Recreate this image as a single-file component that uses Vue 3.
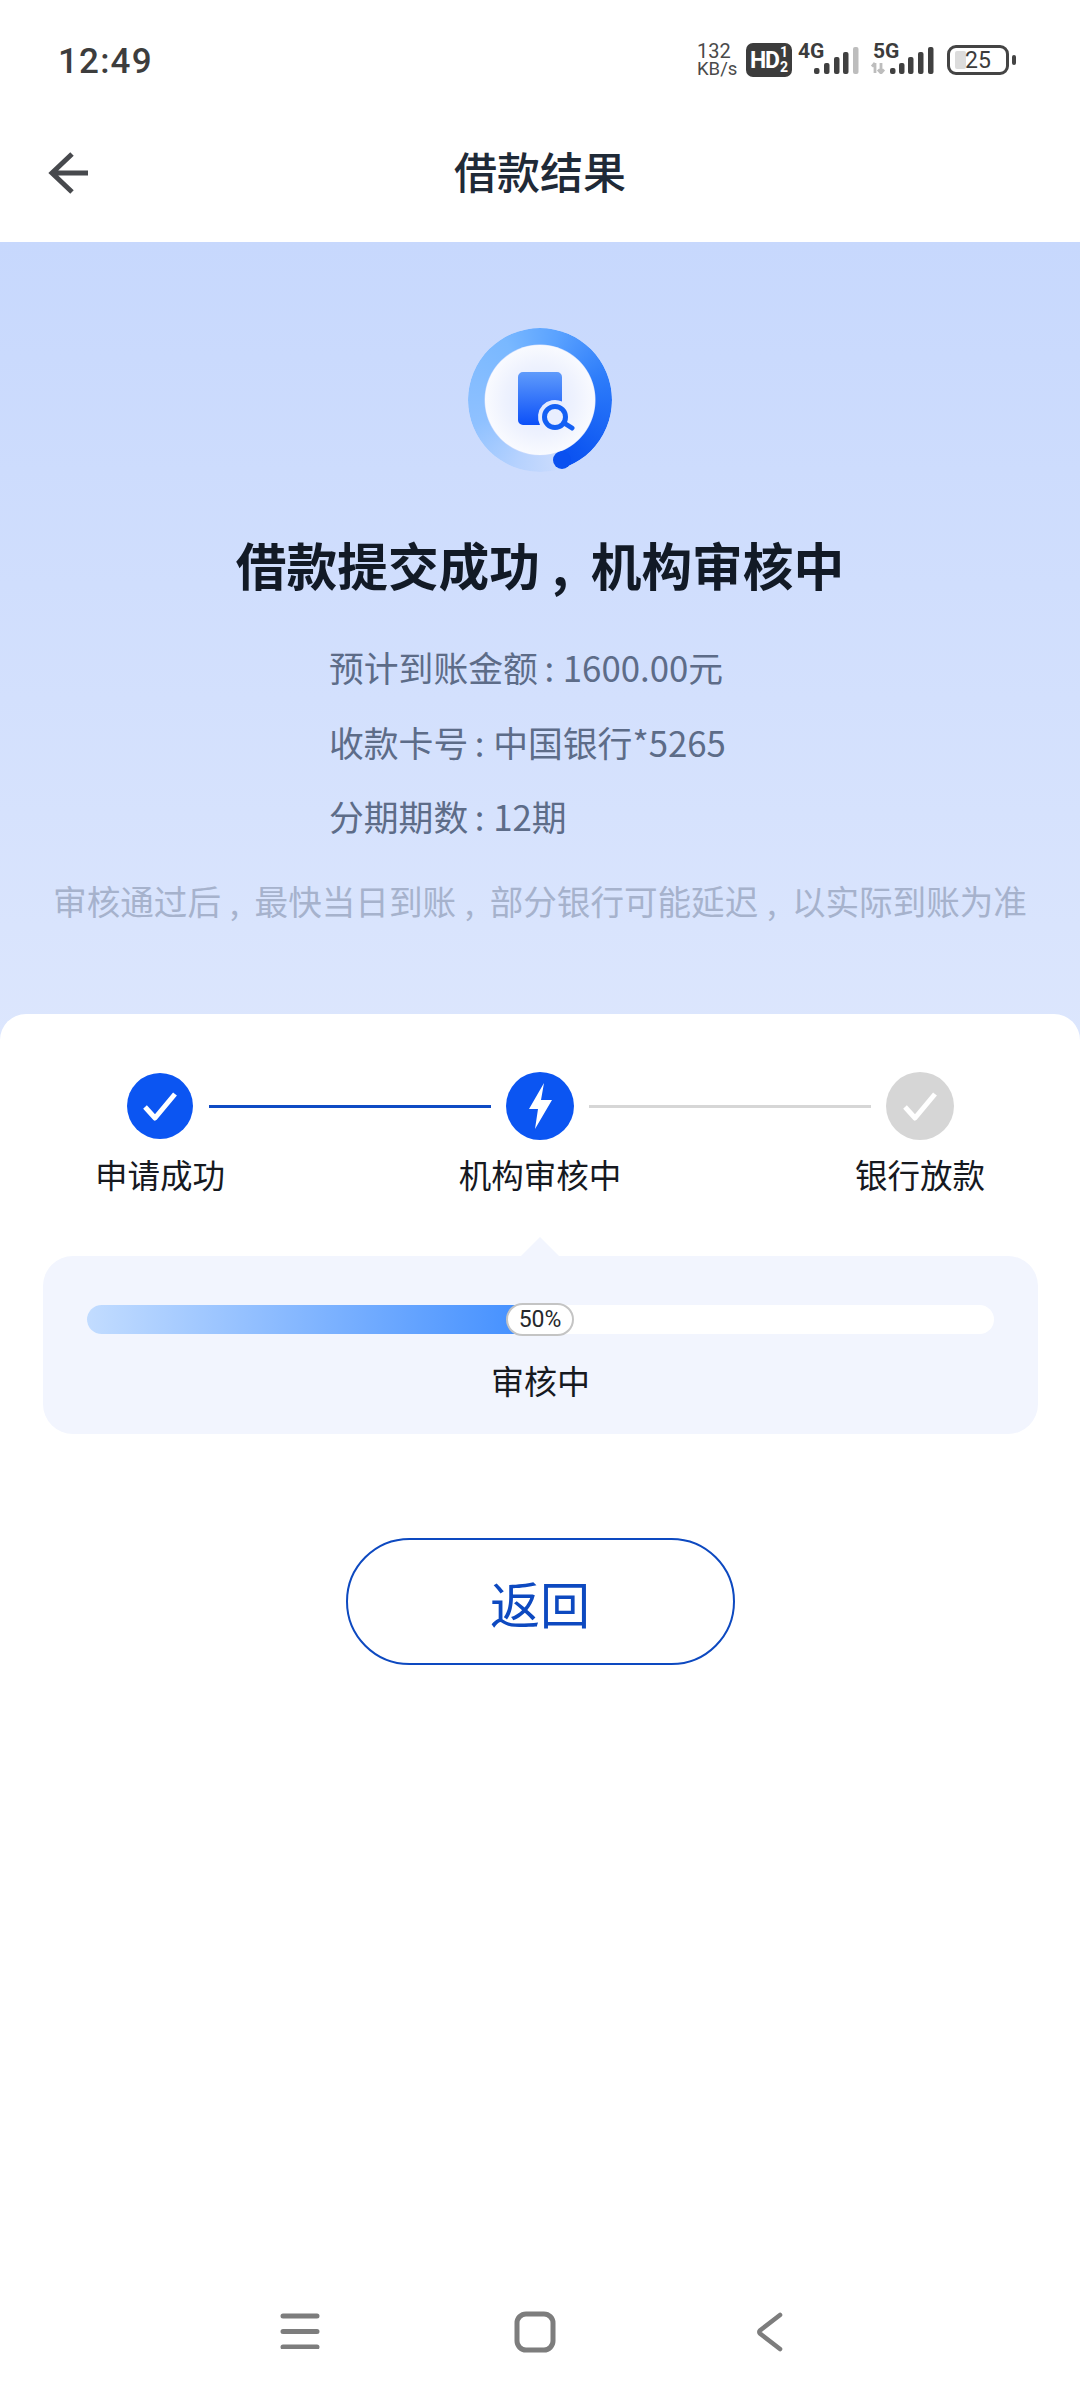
<script setup>
const rows = [
  { label: '预计到账金额', value: '1600.00元' },
  { label: '收款卡号', value: '中国银行*5265' },
  { label: '分期期数', value: '12期' }
]
const noteParts = ['审核通过后', '最快当日到账', '部分银行可能延迟', '以实际到账为准']
const steps = ['申请成功', '机构审核中', '银行放款']
const progress = 50
</script>

<template>
  <div class="page">
    <header class="status">
      <span class="time">12:49</span>
      <div class="status-right">
        <div class="speed"><span>132</span><span class="speed-unit">KB/s</span></div>
        <div class="hd"><b>HD</b><span class="hd-nums"><i>1</i><i>2</i></span></div>
        <div class="net net4">
          <span class="net-label">4G</span>
          <svg width="48" height="30" viewBox="0 0 48 30">
            <g fill="#404040">
              <rect x="0" y="24" width="5.500" height="6" rx="2" />
              <rect x="10" y="19" width="5.500" height="11" rx="2" />
              <rect x="20" y="13" width="5.500" height="17" rx="2" />
              <rect x="29" y="8" width="5.500" height="22" rx="2" />
            </g>
            <rect x="39" y="3" width="5.500" height="27" rx="2" fill="#bdbdbd" />
          </svg>
        </div>
        <div class="net net5">
          <span class="net-label">5G</span>
          <svg width="64" height="30" viewBox="0 0 64 30">
            <path d="M4 19v10M1 22.500l3-3.500M10 29V19M7 25.500l3 3.500 3-3.500" fill="none" stroke="#bdbdbd" stroke-width="2.800" />
            <g fill="#404040">
              <rect x="19" y="24" width="5.500" height="6" rx="2" />
              <rect x="28" y="19" width="5.500" height="11" rx="2" />
              <rect x="37" y="13" width="5.500" height="17" rx="2" />
              <rect x="47" y="8" width="5.500" height="22" rx="2" />
              <rect x="57" y="3" width="5.500" height="27" rx="2" />
            </g>
          </svg>
        </div>
        <div class="battery">
          <div class="battery-body"><span class="battery-fill"></span><span class="battery-num">25</span></div>
          <span class="battery-nub"></span>
        </div>
      </div>
    </header>

    <nav class="topbar">
      <svg class="back" width="42" height="42" viewBox="0 0 42 42">
        <path d="M41 21H5M25 2 5 21l20 19" fill="none" stroke="#47494d" stroke-width="5" />
      </svg>
      <h1>借款结果</h1>
    </nav>

    <section class="hero">
      <div class="emblem">
        <div class="ring"></div>
        <span class="ring-cap"></span>
        <div class="disc">
          <svg width="70" height="70" viewBox="0 0 70 70">
            <defs>
              <linearGradient id="doc" x1="0" y1="0" x2="0" y2="1">
                <stop offset="0" stop-color="#5f9bfb" />
                <stop offset="1" stop-color="#0c50f8" />
              </linearGradient>
            </defs>
            <path d="M5 2h34a5 5 0 0 1 5 5v24.500A17 17 0 0 0 22 55H5a5 5 0 0 1-5-5V7a5 5 0 0 1 5-5z" fill="url(#doc)" />
            <circle cx="37" cy="47" r="10.500" fill="#e9eefe" stroke="#1460f4" stroke-width="5" />
            <path d="M46 53l8 5" fill="none" stroke="#1460f4" stroke-width="5" stroke-linecap="round" />
          </svg>
        </div>
      </div>
      <h2>借款提交成功<span class="pc">,</span>机构审核中</h2>
      <div class="rows">
        <p v-for="r in rows" :key="r.label" class="row">{{ r.label }}<span class="colon">:</span>{{ r.value }}</p>
      </div>
      <p class="note">
        <template v-for="(part, i) in noteParts" :key="part"><span v-if="i" class="pc">,</span>{{ part }}</template>
      </p>
    </section>

    <main class="card">
      <div class="track">
        <span class="dot dot-small on">
          <svg width="40" height="40" viewBox="0 0 40 40"><path d="M5 21l10 11L35 8" fill="none" stroke="#fff" stroke-width="5" stroke-linejoin="round" /></svg>
        </span>
        <span class="line on"></span>
        <span class="dot on">
          <svg width="40" height="48" viewBox="0 0 40 48"><path d="M24 1 9 27h9l-3 20 17-29H21z" fill="#fff" /></svg>
        </span>
        <span class="line"></span>
        <span class="dot off">
          <svg width="40" height="40" viewBox="0 0 40 40"><path d="M5 21l10 11L35 8" fill="none" stroke="#fff" stroke-width="5" stroke-linejoin="round" /></svg>
        </span>
      </div>
      <div class="labels">
        <span v-for="s in steps" :key="s">{{ s }}</span>
      </div>

      <div class="panel">
        <div class="bar">
          <div class="bar-fill" :style="{ width: progress + '%' }"></div>
          <span class="badge">50%</span>
        </div>
        <p class="panel-text">审核中</p>
      </div>

      <button class="return">返回</button>
    </main>

    <footer class="sysnav">
      <svg width="40" height="36" viewBox="0 0 40 36">
        <path d="M3 3h34M3 18.500h34M3 34h34" fill="none" stroke="#7d7d7d" stroke-width="5" stroke-linecap="round" />
      </svg>
      <svg width="42" height="42" viewBox="0 0 42 42">
        <rect x="3" y="3" width="36" height="36" rx="9" fill="none" stroke="#7d7d7d" stroke-width="5" />
      </svg>
      <svg width="30" height="42" viewBox="0 0 30 42">
        <path d="M25 4 5 19.500a2 2 0 0 0 0 3L25 38" fill="none" stroke="#7d7d7d" stroke-width="4.600" stroke-linecap="round" />
      </svg>
    </footer>
  </div>
</template>

<style>
html, body { margin: 0; padding: 0; background: #fff; }
</style>

<style scoped>
.page {
  width: 1080px;
  height: 2400px;
  display: flex;
  flex-direction: column;
  overflow: hidden;
  background: #fff;
  font-family: "Noto Sans CJK SC", "Noto Sans", sans-serif;
}
p, h1, h2 { margin: 0; font-weight: 400; }

.status {
  height: 96px;
  flex: none;
  padding: 42px 64px 0 58px;
  box-sizing: border-box;
  display: flex;
  justify-content: space-between;
  align-items: flex-start;
}
.time {
  font: 500 35px/36px Roboto, sans-serif;
  letter-spacing: 1.200px;
  color: #3d3d3d;
  margin-top: 2px;
}
.status-right { display: flex; align-items: flex-start; height: 36px; }
.speed {
  width: 49px;
  display: flex;
  flex-direction: column;
  font: 400 20px/18px Roboto, sans-serif;
  color: #4a4a4a;
}
.speed-unit { font-size: 18.500px; }
.hd {
  width: 46px;
  height: 34px;
  margin-top: 1px;
  background: #3c3c3c;
  border-radius: 7px;
  display: flex;
  align-items: center;
  justify-content: center;
  color: #fff;
  font-family: Roboto, sans-serif;
}
.hd b { font-size: 23px; font-weight: 700; letter-spacing: -1px; }
.hd-nums { display: flex; flex-direction: column; margin-left: 1px; }
.hd-nums i { font: 700 14px/15px Roboto, sans-serif; }
.net { position: relative; height: 34px; }
.net svg { position: absolute; }
.net-label {
  position: absolute;
  font: 700 21px/21px Roboto, sans-serif;
  color: #3c3c3c;
  top: -1px;
}
.net4 { width: 73px; margin-left: 6px; }
.net4 .net-label { left: 0; }
.net4 svg { left: 16px; top: 2px; }
.net5 { width: 76px; }
.net5 .net-label { left: 2px; }
.net5 svg { left: 0; top: 2px; }
.battery { display: flex; align-items: center; height: 30px; margin-top: 3px; }
.battery-body {
  position: relative;
  width: 62px;
  height: 30px;
  box-sizing: border-box;
  border: 3px solid #444;
  border-radius: 9px;
  display: flex;
  align-items: center;
  justify-content: center;
}
.battery-fill {
  position: absolute;
  left: 5px;
  top: 3px;
  bottom: 3px;
  width: 11px;
  background: #dcdcdc;
  border-radius: 2px;
}
.battery-num { position: relative; font: 400 23px/23px Roboto, sans-serif; color: #3c3c3c; }
.battery-nub { width: 4px; height: 10px; margin-left: 3px; background: #444; border-radius: 2px; }

.topbar {
  height: 146px;
  flex: none;
  position: relative;
  display: flex;
  align-items: center;
  justify-content: center;
  box-sizing: border-box;
}
.back { position: absolute; left: 47px; top: 56px; }
.topbar h1 {
  font-size: 43px;
  line-height: 60px;
  font-weight: 500;
  color: #1f2a37;
  margin-top: 1px;
}

.hero {
  height: 798px;
  flex: none;
  box-sizing: border-box;
  background: linear-gradient(180deg, #c7d8fd 0%, #dce6fd 100%);
  padding-top: 86px;
  display: flex;
  flex-direction: column;
  align-items: center;
}
.emblem { position: relative; width: 144px; height: 144px; flex: none; }
.ring {
  position: absolute;
  inset: 0;
  border-radius: 50%;
  background: conic-gradient(from 160deg, #ccdcfd 0deg, #b6d2fe 40deg, #8fc1ff 90deg, #79b8ff 170deg, #5aa2ff 215deg, #2d7cfa 270deg, #0f58f2 340deg, #0a50f0 360deg);
  -webkit-mask: radial-gradient(circle, transparent 55px, #000 56px);
  mask: radial-gradient(circle, transparent 55px, #000 56px);
}
.ring-cap {
  position: absolute;
  left: 85px;
  top: 123px;
  width: 18px;
  height: 18px;
  border-radius: 50%;
  background: #0a50f0;
}
.disc {
  position: absolute;
  inset: 17px;
  border-radius: 50%;
  background: radial-gradient(circle, #dfe7fe 0%, #eef2fe 45%, #ffffff 85%);
  display: flex;
  align-items: center;
  justify-content: center;
}
.disc svg { margin-top: 10px; margin-left: 26px; flex: none; }
.hero h2 {
  font-size: 50.700px;
  line-height: 70px;
  font-weight: 700;
  color: #121a26;
  margin-top: 57px;
  white-space: nowrap;
}
.pc {
  display: inline-block;
  width: 1em;
  box-sizing: border-box;
  padding-right: 0.2em;
  text-align: center;
}
.rows {
  align-self: flex-start;
  margin-left: 329px;
  margin-top: 44px;
  display: flex;
  flex-direction: column;
  gap: 26.500px;
}
.row {
  font-size: 34.800px;
  line-height: 48px;
  color: #5d6c88;
  white-space: nowrap;
}
.colon {
  display: inline-block;
  width: 25px;
  text-align: center;
  padding-right: 2px;
  box-sizing: border-box;
}
.note {
  font-size: 33.600px;
  line-height: 44px;
  color: #a6b2cc;
  white-space: nowrap;
  margin-top: 39px;
}

.card {
  flex: 1;
  margin-top: -26px;
  background: #fff;
  border-radius: 26px 26px 0 0;
  position: relative;
  padding-top: 58px;
  display: flex;
  flex-direction: column;
  align-items: stretch;
}
.track {
  display: flex;
  align-items: center;
  padding: 0 126px;
  height: 68px;
}
.dot {
  width: 68px;
  height: 68px;
  flex: none;
  border-radius: 50%;
  display: flex;
  align-items: center;
  justify-content: center;
}
.dot-small { width: 66px; height: 66px; margin: 0 1px; }
.dot.on { background: #0b55f2; }
.dot.off { background: #d6d6d6; }
.line { flex: 1; height: 3px; margin: 0 15px; background: #d6d6d6; }
.line.on { background: #0f4bc4; }
.labels {
  display: flex;
  justify-content: space-between;
  padding: 0 76px;
  margin-top: 11px;
}
.labels span {
  width: 168px;
  text-align: center;
  font-size: 32.500px;
  line-height: 46px;
  color: #16191f;
  white-space: nowrap;
}
.panel {
  position: relative;
  margin: 59px 42px 0 43px;
  height: 178px;
  box-sizing: border-box;
  background: #f2f5fe;
  border-radius: 30px;
  padding: 49px 44px 0;
  display: flex;
  flex-direction: column;
  align-items: center;
}
.panel::before {
  content: "";
  position: absolute;
  left: 477px;
  top: -19px;
  width: 0;
  height: 0;
  border-left: 20px solid transparent;
  border-right: 20px solid transparent;
  border-bottom: 20px solid #f2f5fe;
}
.bar {
  position: relative;
  width: 907px;
  height: 29px;
  flex: none;
  background: #fff;
  border-radius: 15px;
}
.bar-fill {
  height: 100%;
  border-radius: 15px 0 0 15px;
  background: linear-gradient(90deg, #c2dcff 0%, #3f8dff 100%);
}
.badge {
  position: absolute;
  left: 419px;
  top: -2px;
  width: 68px;
  height: 33px;
  box-sizing: border-box;
  background: #fff;
  border: 2px solid #c4c4c4;
  border-radius: 17px;
  text-align: center;
  font: 400 23px/29px Roboto, sans-serif;
  color: #26282c;
}
.panel-text {
  font-size: 33px;
  line-height: 46px;
  margin-top: 23px;
  color: #16191f;
}
.return {
  width: 389px;
  height: 127px;
  margin: 104px auto 0;
  flex: none;
  background: #fff;
  border: 2.500px solid #0d49c0;
  border-radius: 64px;
  color: #0d49c0;
  font-family: inherit;
  font-size: 50px;
  padding: 0;
}

.sysnav {
  position: absolute;
  left: 0;
  right: 0;
  top: 2311px;
  height: 42px;
  display: block;
}
.sysnav svg { position: absolute; top: 0; }
.sysnav svg:nth-child(1) { left: 280px; top: 2px; }
.sysnav svg:nth-child(2) { left: 514px; }
.sysnav svg:nth-child(3) { left: 755px; }
</style>
